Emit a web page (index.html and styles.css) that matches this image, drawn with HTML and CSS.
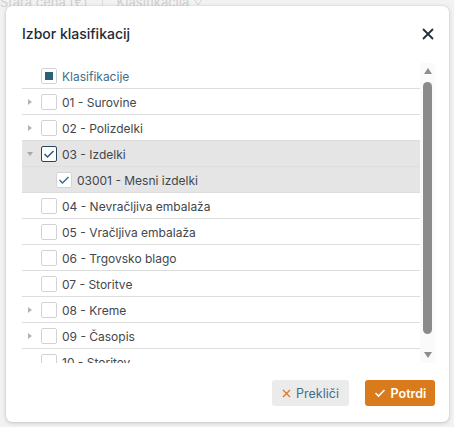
FILE: index.html
```html
<!DOCTYPE html>
<html lang="sl">
<head>
<meta charset="utf-8">
<link rel="stylesheet" href="styles.css">
</head>
<body>
<div class="backdrop-head">
  <span>Stara cena [€]</span><span class="sep"></span><span>Klasifikacija</span><svg class="funnel" width="10" height="8" viewBox="0 0 10 8"><path d="M1 1 L9 1 L5 7 Z" fill="none" stroke="#d2d2d2" stroke-width="1"/></svg>
</div>
<div class="modal">
  <div class="header">
    <h1 class="title">Izbor klasifikacij</h1>
    <svg class="close" width="12" height="12" viewBox="0 0 12 12"><path d="M1.5 1.5 L10.5 10.5 M10.5 1.5 L1.5 10.5" stroke="#1f2f3d" stroke-width="1.8" stroke-linecap="round"/></svg>
  </div>
  <div class="tree-wrap">
    <div class="tree">
      <div class="row">
        <span class="toggler"></span>
        <span class="cb"><span class="partial"></span></span>
        <span class="label root">Klasifikacije</span>
      </div>
      <div class="row">
        <span class="toggler"><span class="tri-right"></span></span>
        <span class="cb"></span>
        <span class="label">01 - Surovine</span>
      </div>
      <div class="row">
        <span class="toggler"><span class="tri-right"></span></span>
        <span class="cb"></span>
        <span class="label">02 - Polizdelki</span>
      </div>
      <div class="row sel">
        <span class="toggler"><span class="tri-down"></span></span>
        <span class="cb checked"><svg width="12" height="10" viewBox="0 0 12 10"><path d="M1.5 5 L4.5 8 L10.5 2" fill="none" stroke="#2d5a73" stroke-width="1.5"/></svg></span>
        <span class="label">03 - Izdelki</span>
      </div>
      <div class="row sel child">
        <span class="toggler"></span>
        <span class="cb light"><svg width="12" height="10" viewBox="0 0 12 10"><path d="M1.5 5 L4.5 8 L10.5 2" fill="none" stroke="#3a6f8c" stroke-width="1.5"/></svg></span>
        <span class="label">03001 - Mesni izdelki</span>
      </div>
      <div class="row">
        <span class="toggler"></span>
        <span class="cb"></span>
        <span class="label">04 - Nevračljiva embalaža</span>
      </div>
      <div class="row">
        <span class="toggler"></span>
        <span class="cb"></span>
        <span class="label">05 - Vračljiva embalaža</span>
      </div>
      <div class="row">
        <span class="toggler"></span>
        <span class="cb"></span>
        <span class="label">06 - Trgovsko blago</span>
      </div>
      <div class="row">
        <span class="toggler"></span>
        <span class="cb"></span>
        <span class="label">07 - Storitve</span>
      </div>
      <div class="row">
        <span class="toggler"><span class="tri-right"></span></span>
        <span class="cb"></span>
        <span class="label">08 - Kreme</span>
      </div>
      <div class="row">
        <span class="toggler"><span class="tri-right"></span></span>
        <span class="cb"></span>
        <span class="label">09 - Časopis</span>
      </div>
      <div class="row">
        <span class="toggler"></span>
        <span class="cb"></span>
        <span class="label">10 - Storitev</span>
      </div>
    </div>
    <div class="scrollbar">
      <span class="sb-up"></span>
      <span class="sb-thumb"></span>
      <span class="sb-down"></span>
    </div>
  </div>
  <div class="footer">
    <button class="btn cancel"><svg width="9" height="9" viewBox="0 0 9 9"><path d="M1 1 L8 8 M8 1 L1 8" stroke="#e07b20" stroke-width="1.4"/></svg>Prekliči</button>
    <button class="btn confirm"><svg width="12" height="10" viewBox="0 0 12 10"><path d="M1.5 5 L4.5 8 L10.5 2" fill="none" stroke="#ffffff" stroke-width="1.6"/></svg>Potrdi</button>
  </div>
</div>
</body>
</html>
```

FILE: styles.css
```css
* { box-sizing: border-box; }
html, body { margin: 0; padding: 0; }
body {
  width: 454px;
  height: 427px;
  overflow: hidden;
  background: #f2f2f2;
  font-family: Inter, "Noto Sans", sans-serif;
  position: relative;
}
.backdrop-head {
  display: flex;
  align-items: center;
  gap: 10px;
  margin-top: -5px;
  padding-left: 0;
  height: 14px;
  font-size: 13px;
  color: #cfcfcf;
  white-space: nowrap;
}
.backdrop-head .sep {
  width: 1px;
  height: 14px;
  background: #dcdcdc;
  margin: 0 4px;
}
.funnel { margin-left: -6px; }
.modal {
  position: absolute;
  left: 6px;
  top: 6px;
  width: 443px;
  height: 416px;
  background: #ffffff;
  border-radius: 6px;
  box-shadow: 0 1px 4px rgba(0,0,0,0.18), 0 0 1px rgba(0,0,0,0.2);
  display: flex;
  flex-direction: column;
  padding: 0 13px 0 16px;
}
.header {
  display: flex;
  align-items: center;
  justify-content: space-between;
  height: 57px;
  padding-bottom: 2px;
}
.title {
  margin: 0;
  font-size: 14px;
  font-weight: 500;
  color: #1e2b37;
  letter-spacing: 0;
}
.close { margin-right: 2px; }
.tree-wrap {
  display: flex;
  height: 300px;
  overflow: hidden;
}
.tree {
  width: 398px;
  flex: none;
}
.row {
  display: flex;
  align-items: center;
  height: 26px;
  padding-top: 1px;
  border-bottom: 1px solid #dddddd;
  font-size: 12px;
  color: #42474c;
}
.row.sel { background: #e5e5e5; }
.toggler {
  width: 19px;
  flex: none;
  display: flex;
  align-items: center;
  justify-content: center;
  padding-right: 6px;
  padding-left: 2px;
}
.tri-right {
  width: 0; height: 0;
  border-top: 3px solid transparent;
  border-bottom: 3px solid transparent;
  border-left: 4px solid #b4b4b4;
}
.tri-down {
  width: 0; height: 0;
  border-left: 3.5px solid transparent;
  border-right: 3.5px solid transparent;
  border-top: 4px solid #a8a8a8;
}
.cb {
  width: 16px;
  height: 16px;
  flex: none;
  border: 1px solid #d3d3d3;
  border-radius: 2px;
  background: #ffffff;
  display: flex;
  align-items: center;
  justify-content: center;
}
.cb.checked { border-color: #2a465a; }
.child .toggler { width: 34px; }
.partial {
  width: 8px;
  height: 8px;
  background: #2e5f78;
}
.label {
  margin-left: 5px;
  white-space: nowrap;
}
.label.root { color: #3f7089; }
.scrollbar {
  width: 15px;
  flex: none;
  background: #fafafa;
  display: flex;
  flex-direction: column;
  align-items: center;
  padding-top: 5px;
}
.sb-up {
  width: 0; height: 0;
  border-left: 4.5px solid transparent;
  border-right: 4.5px solid transparent;
  border-bottom: 6px solid #8e8e8e;
}
.sb-thumb {
  width: 9px;
  height: 252px;
  margin-top: 8px;
  border-radius: 5px;
  background: #8b8b8b;
}
.sb-down {
  margin-top: 18px;
  width: 0; height: 0;
  border-left: 4.5px solid transparent;
  border-right: 4.5px solid transparent;
  border-top: 6px solid #8e8e8e;
}
.footer {
  display: flex;
  justify-content: flex-end;
  gap: 16px;
  padding-top: 17px;
  padding-right: 1px;
}
.btn {
  height: 26px;
  border: none;
  border-radius: 3px;
  font-family: Inter, "Noto Sans", sans-serif;
  font-size: 12.5px;
  display: flex;
  align-items: center;
  justify-content: center;
  gap: 5px;
  padding: 0;
}
.cancel {
  width: 77px;
  background: #ebebeb;
  color: #3f6f88;
}
.confirm {
  width: 70px;
  background: #d97a1c;
  color: #ffffff;
  font-weight: 600;
}
```
